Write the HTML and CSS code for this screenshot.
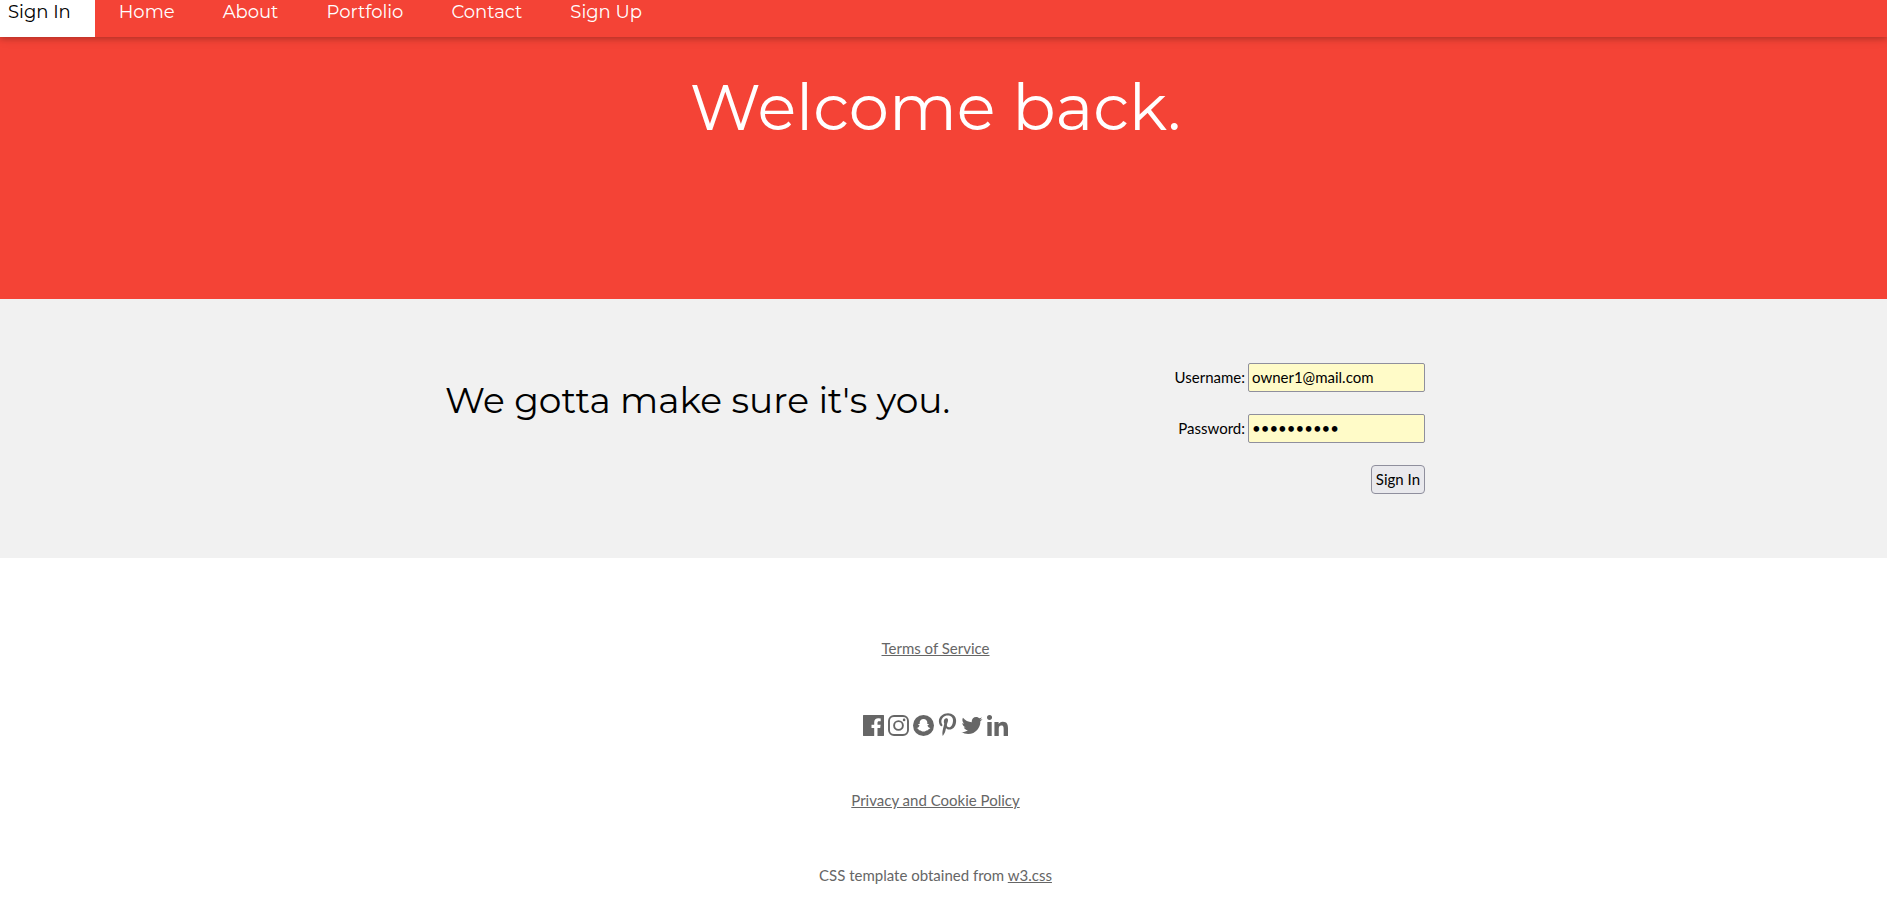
FILE: index.html
```html
<!DOCTYPE html>
<html lang="en">
<head>
<meta charset="utf-8">
<meta name="viewport" content="width=device-width, initial-scale=1">
<title>Sign In</title>
<link rel="stylesheet" href="styles.css">
</head>
<body>
<nav class="navbar">
  <a class="active" href="#">Sign In</a>
  <a href="#">Home</a>
  <a href="#">About</a>
  <a href="#">Portfolio</a>
  <a href="#">Contact</a>
  <a href="#">Sign Up</a>
</nav>
<header class="hero"><h1>Welcome back.</h1></header>
<main class="panel">
  <div class="content">
    <h2>We gotta make sure it's you.</h2>
    <form class="login">
      <div class="field"><label for="user">Username:</label><input id="user" type="text" value="owner1@mail.com"></div>
      <div class="field"><label for="pass">Password:</label><input id="pass" type="password" value="abcdefghij"></div>
      <button type="button">Sign In</button>
    </form>
  </div>
</main>
<footer class="footer">
  <p><a href="#">Terms of Service</a></p>
  <div class="social">
    <a href="#" aria-label="Facebook"><svg class="icon" viewBox="0 0 21 21"><path d="M.4 0H20.6Q21 0 21 .4V20.6Q21 21 20.6 21H14.500V12.900H17.200L17.600 9.700H14.500V7.700C14.500 6.800 14.800 6.200 16.100 6.200H17.700V3.400Q16.900 3.200 15.300 3.200C12.900 3.200 11.200 4.700 11.200 7.300V9.700H8.500V12.900H11.200V21H.4Q0 21 0 20.600V.4Q0 0 .4 0Z"/></svg></a>
    <a href="#" aria-label="Instagram"><svg class="icon" viewBox="0 0 21 21"><rect x="1" y="1" width="19" height="19" rx="5" fill="none" stroke="currentColor" stroke-width="1.900"/><circle cx="10.500" cy="10.500" r="4.400" fill="none" stroke="currentColor" stroke-width="1.900"/><circle cx="16.100" cy="4.900" r="1.300"/></svg></a>
    <a href="#" aria-label="Snapchat"><svg class="icon" viewBox="0 0 21 21"><circle cx="10.500" cy="10.500" r="10.500"/><path fill="#fff" d="M10.500 3.900C8 3.900 6.700 5.700 6.700 7.500V9L5.400 8.900C4.900 9.200 5.200 9.700 6.400 10.200C6.800 10.600 5.900 12.500 3.900 13.100C3.500 13.600 4.200 13.900 5.500 14.200L5.900 15.200C7.900 14.800 8.400 16.600 10.500 16.600S13.100 14.800 15.100 15.200L15.500 14.200C16.800 13.900 17.500 13.600 17.100 13.100C15.100 12.500 14.200 10.600 14.600 10.200C15.800 9.700 16.100 9.200 15.600 8.900L14.300 9V7.500C14.300 5.700 13 3.900 10.500 3.900Z"/></svg></a>
    <a href="#" aria-label="Pinterest"><svg class="icon pinterest" viewBox="0 0 384 512"><path d="M204 6.500C101.400 6.500 0 74.900 0 185.600 0 256 39.600 296 63.600 296c9.900 0 15.600-27.600 15.600-35.400 0-9.300-23.700-29.100-23.700-67.800 0-80.400 61.200-137.400 140.400-137.400 68.100 0 118.500 38.700 118.500 109.800 0 53.100-21.300 152.700-90.300 152.700-24.900 0-46.200-18-46.200-43.800 0-37.800 26.400-74.400 26.400-113.400 0-66.200-93.900-54.200-93.900 25.800 0 16.800 2.100 35.400 9.600 50.700-13.800 59.400-42 147.900-42 209.100 0 18.900 2.700 37.500 4.500 56.400 3.400 3.800 1.700 3.400 6.900 1.500 50.400-69 48.600-82.500 71.400-172.800 12.300 23.400 44.100 36 69.300 36 106.200 0 153.900-103.500 153.900-196.800C384 71.300 298.200 6.500 204 6.500z"/></svg></a>
    <a href="#" aria-label="Twitter"><svg class="icon twitter" viewBox="0 0 512 512"><path d="M459.370 151.716c.325 4.548.325 9.097.325 13.645 0 138.720-105.583 298.558-298.558 298.558-59.452 0-114.680-17.219-161.137-47.106 8.447.974 16.568 1.299 25.340 1.299 49.055 0 94.213-16.568 130.274-44.832-46.132-.975-84.792-31.188-98.112-72.772 6.498.974 12.995 1.624 19.818 1.624 9.421 0 18.843-1.300 27.614-3.573-48.081-9.747-84.143-51.980-84.143-102.985v-1.299c13.969 7.797 30.214 12.670 47.431 13.319-28.264-18.843-46.781-51.005-46.781-87.391 0-19.492 5.197-37.360 14.294-52.954 51.655 63.675 129.300 105.258 216.365 109.807-1.624-7.797-2.599-15.918-2.599-24.040 0-57.828 46.782-104.934 104.934-104.934 30.213 0 57.502 12.670 76.670 33.137 23.715-4.548 46.456-13.320 66.599-25.340-7.798 24.366-24.366 44.833-46.132 57.827 21.117-2.273 41.584-8.122 60.426-16.243-14.292 20.791-32.161 39.308-52.628 54.253z"/></svg></a>
    <a href="#" aria-label="LinkedIn"><svg class="icon" viewBox="0 0 448 448"><path d="M100.280 448H7.400V148.900h92.880zM53.790 108.100C24.090 108.100 0 83.500 0 53.800a53.790 53.790 0 0 1 107.580 0c0 29.700-24.100 54.300-53.790 54.300zM447.900 448h-92.680V302.400c0-34.700-.7-79.200-48.290-79.200-48.290 0-55.690 37.700-55.690 76.700V448h-92.780V148.900h89.080v40.800h1.300c12.400-23.500 42.690-48.300 87.880-48.300 94 0 111.280 61.900 111.280 142.300V448z"/></svg></a>
  </div>
  <p><a href="#">Privacy and Cookie Policy</a></p>
  <p>CSS template obtained from <a href="#">w3.css</a></p>
</footer>
</body>
</html>
```

FILE: styles.css
```css
* { box-sizing: border-box; }
body {
  margin: 0;
  font: 15px/23px Lato, sans-serif;
  color: #000;
  background: #fff;
}
h1, h2 {
  margin: 0;
  font-family: Montserrat, Inter, sans-serif;
  font-weight: 400;
}
.navbar {
  position: relative;
  display: flex;
  background: #f44336;
  box-shadow: 0 2px 5px 0 rgba(0, 0, 0, .16), 0 2px 10px 0 rgba(0, 0, 0, .12);
  font: 18px/24px Montserrat, Inter, sans-serif;
}
.navbar a {
  padding: 0 24px 13px;
  color: #fff;
  text-decoration: none;
}
.navbar .active {
  padding-left: 8px;
  background: #fff;
  color: #000;
}
.hero {
  padding: 30px 16px 152px 0;
  background: #f44336;
  color: #fff;
  text-align: center;
}
.hero h1 {
  font-size: 64px;
  line-height: 80px;
}
.panel {
  padding: 64px 17px 64px 0;
  background: #f1f1f1;
}
.content {
  display: flex;
  justify-content: space-between;
  align-items: flex-start;
  max-width: 980px;
  margin: 0 auto;
}
.content h2 {
  padding-top: 12px;
  font-size: 36px;
  line-height: 50px;
}
.login {
  display: flex;
  flex-direction: column;
  align-items: flex-end;
  gap: 22px;
}
.field {
  display: flex;
  align-items: center;
  gap: 3px;
}
.login input {
  width: 177px;
  height: 29px;
  padding: 0 3px 1px;
  border: 1px solid #8f8f9d;
  border-radius: 2px;
  background: #fffbc8;
  color: #000;
  font: inherit;
}
.login button {
  height: 29px;
  padding: 1px 4px;
  border: 1px solid #8f8f9d;
  border-radius: 4px;
  background: #e9e9ed;
  color: #000;
  font: inherit;
}
.footer {
  display: flex;
  flex-direction: column;
  align-items: center;
  gap: 52px;
  padding: 79px 16px 34px 0;
  color: #666;
}
.footer p { margin: 0; }
.footer a { color: inherit; }
.social {
  display: flex;
  align-items: flex-end;
  gap: 4px;
  height: 25px;
  padding-bottom: 1px;
}
.social a { display: flex; }
.icon {
  width: 21px;
  height: 21px;
  fill: currentColor;
}
.pinterest {
  width: 19px;
  height: 23px;
}
.twitter { width: 22px; }
```
